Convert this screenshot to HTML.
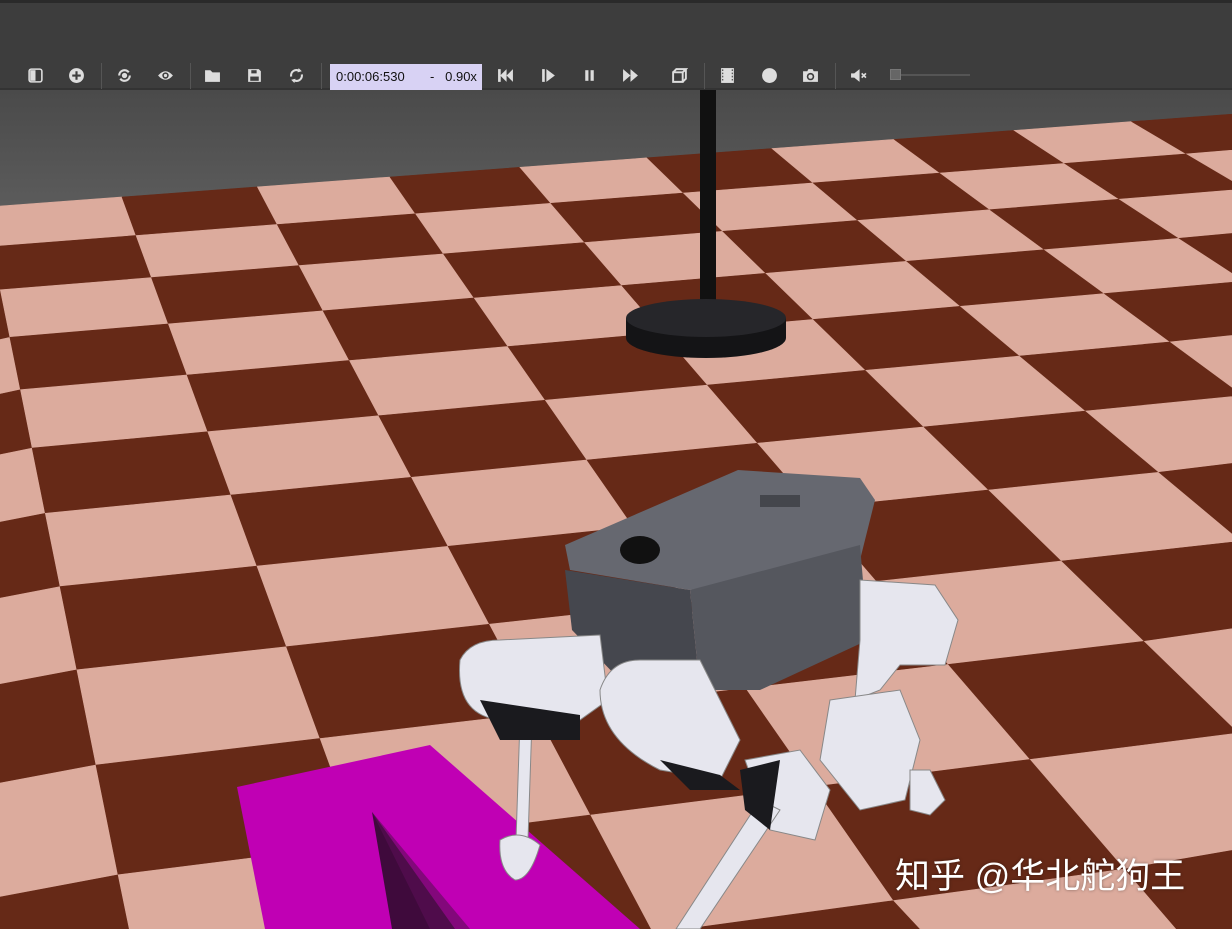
<!DOCTYPE html>
<html><head><meta charset="utf-8"><style>
*{margin:0;padding:0;box-sizing:border-box}
html,body{width:1232px;height:929px;overflow:hidden}
body{background:#555;font-family:"Liberation Sans",sans-serif;position:relative}
#sky{position:absolute;left:0;top:90px;width:1232px;height:200px;background:linear-gradient(#4a4a4a,#5c5c5c 60%,#666)}
#floor{position:absolute;left:0;top:0;display:block}
#tb{position:absolute;left:0;top:0;width:1232px;height:90px;background:#3d3d3d;border-top:3px solid #2a2a2a;border-bottom:2px solid #333}
.ic{position:absolute;top:64px;width:17px;height:17px;fill:#ddd;color:#ddd}
.sep{position:absolute;top:60px;width:1px;height:26px;background:#555}
#time{position:absolute;left:330px;top:61px;width:152px;height:26px;background:#d8d2f4;color:#111;font-size:13px;line-height:26px;padding-left:6px}
#wm{position:absolute;left:895px;top:853px;color:#fff;font-size:35px;line-height:48px;font-family:"Liberation Sans","Noto Sans CJK SC",sans-serif;text-shadow:0 0 3px rgba(0,0,0,.4)}
</style></head><body>
<div id="sky"></div>
<svg id="floor" width="1232" height="929"></svg>
<script>
(function(){
var P=[[122,197],[390,177],[587,460],[231,495]];
var x0=P[0][0],y0=P[0][1],x1=P[1][0],y1=P[1][1],x2=P[2][0],y2=P[2][1],x3=P[3][0],y3=P[3][1];
var dx1=x1-x2,dx2=x3-x2,dy1=y1-y2,dy2=y3-y2,sx=x0-x1+x2-x3,sy=y0-y1+y2-y3;
var den=dx1*dy2-dy1*dx2;
var g=(sx*dy2-sy*dx2)/den,h=(dx1*sy-dy1*sx)/den;
var a=x1-x0+g*x1,b=x3-x0+h*x3,c=x0,d=y1-y0+g*y1,e=y3-y0+h*y3,f=y0;
function m(u,v){var s=u/2,t=v/6;var w=g*s+h*t+1;return [(a*s+b*t+c)/w,(d*s+e*t+f)/w,w];}
var out='';
for(var v=0;v<22;v++)for(var u=-12;u<16;u++){
 var p=[m(u,v),m(u+1,v),m(u+1,v+1),m(u,v+1)];
 if(p[0][2]<=0.05||p[1][2]<=0.05||p[2][2]<=0.05||p[3][2]<=0.05)continue;
 var col=((u+v)%2+2)%2?'#dcab9d':'#662917';
 out+='<polygon points="'+p.map(function(q){return Math.max(-50,Math.min(1300,q[0])).toFixed(1)+','+Math.max(-50,Math.min(1000,q[1])).toFixed(1)}).join(' ')+'" fill="'+col+'" stroke="'+col+'" stroke-width="0.6"/>';
}
document.getElementById('floor').innerHTML=out;
})();
</script>
<svg style="position:absolute;left:0;top:0;display:block" width="1232" height="929">
<rect x="700" y="90" width="16" height="225" fill="#111"/>
<path d="M626 318 L626 338 A80 20 0 0 0 786 338 L786 318 Z" fill="#141416"/>
<ellipse cx="706" cy="318" rx="80" ry="19" fill="#26262a"/>
<polygon points="237,787 430,745 640,929 265,929" fill="#c000b4"/>
<polygon points="372,812 392,929 455,929" fill="#3f0a3c"/>
<polygon points="372,812 430,929 470,929" fill="#5a0d55" opacity=".6"/>
<polygon points="565,545 738,470 860,478 875,500 860,560 690,590 570,570" fill="#666870"/>
<polygon points="565,570 690,590 700,690 620,680 572,630" fill="#45474e"/>
<polygon points="690,590 860,545 868,640 760,690 700,690" fill="#55575e"/>
<ellipse cx="640" cy="550" rx="20" ry="14" fill="#111"/>
<rect x="760" y="495" width="40" height="12" fill="#44464c"/>
<g fill="#e6e6ee" stroke="#888" stroke-width="1">
<path d="M460 660 Q470 640 500 640 L600 635 L608 700 L580 720 L500 720 Q455 715 460 660Z"/>
<path d="M520 720 L532 720 L528 840 L516 840Z"/>
<path d="M500 840 Q520 828 540 845 Q530 880 515 880 Q498 870 500 840Z"/>
<path d="M600 690 Q610 660 640 660 L700 660 L740 740 L720 780 L660 770 Q600 740 600 690Z"/>
<path d="M745 760 L800 750 L830 790 L815 840 L770 830Z"/>
<path d="M760 800 L780 810 L700 929 L676 929Z"/>
<path d="M860 580 L935 585 L958 620 L945 665 L900 665 L880 690 L855 700 L860 640Z"/>
<path d="M830 700 L900 690 L920 740 L905 800 L860 810 L820 760Z"/>
<path d="M910 770 L930 770 L945 800 L930 815 L910 810Z"/>
</g>
<g fill="#1a1a1e">
<path d="M480 700 L580 715 L580 740 L500 740Z"/>
<path d="M660 760 L720 775 L740 790 L690 790Z"/>
<path d="M740 770 L780 760 L770 830 L745 810Z"/>
</g>
</svg>
<div id="tb">
<svg class="ic" style="left:27px" viewBox="0 0 16 16"><rect x="2" y="2" width="12" height="12" rx="2" fill="none" stroke="#ddd" stroke-width="1.5"/><rect x="3" y="3" width="5" height="10" fill="#ddd"/></svg>
<svg class="ic" style="left:68px" viewBox="0 0 16 16"><circle cx="8" cy="8" r="7"/><path d="M8 4v8M4 8h8" stroke="#3d3d3d" stroke-width="2"/></svg>
<div class="sep" style="left:101px"></div>
<svg class="ic" style="left:116px" viewBox="0 0 16 16"><path d="M3 8a5 5 0 0 1 9-3M13 8a5 5 0 0 1-9 3" fill="none" stroke="#ddd" stroke-width="2"/><circle cx="8" cy="8" r="2.5"/></svg>
<svg class="ic" style="left:157px" viewBox="0 0 16 16"><path d="M1 8Q8 0 15 8Q8 16 1 8Z"/><circle cx="8" cy="8" r="3" fill="#3d3d3d"/><circle cx="8" cy="8" r="1.5"/></svg>
<div class="sep" style="left:190px"></div>
<svg class="ic" style="left:204px" viewBox="0 0 16 16"><path d="M1 3h5l2 2h7v9H1Z"/></svg>
<svg class="ic" style="left:246px" viewBox="0 0 16 16"><path d="M2 2h10l2 2v10H2Z"/><rect x="5" y="3" width="5" height="3" fill="#3d3d3d"/><rect x="4" y="9" width="8" height="4" fill="#3d3d3d"/></svg>
<svg class="ic" style="left:288px" viewBox="0 0 16 16"><path d="M3 9a5 5 0 0 1 8-5M13 7a5 5 0 0 1-8 5" fill="none" stroke="#ddd" stroke-width="2"/><path d="M10 1l3 3-4 1zM6 15l-3-3 4-1z"/></svg>
<div class="sep" style="left:321px"></div>
<div id="time">0:00:06:530&nbsp;&nbsp;&nbsp;&nbsp;&nbsp;&nbsp;&nbsp;-&nbsp;&nbsp;&nbsp;0.90x</div>
<svg class="ic" style="left:497px" viewBox="0 0 16 16"><rect x="1" y="2" width="2.5" height="12"/><path d="M9 2v12L3 8ZM15 2v12L9 8Z"/></svg>
<svg class="ic" style="left:540px" viewBox="0 0 16 16"><rect x="2" y="2" width="2.5" height="12"/><path d="M6 2v12l8-6Z"/></svg>
<svg class="ic" style="left:581px" viewBox="0 0 16 16"><rect x="4" y="3" width="3" height="10"/><rect x="9" y="3" width="3" height="10"/></svg>
<svg class="ic" style="left:622px" viewBox="0 0 16 16"><path d="M1 2v12l7-6ZM8 2v12l7-6Z"/></svg>
<svg class="ic" style="left:671px" viewBox="0 0 16 16"><path d="M2 5h9v9H2ZM2 5l3-3h9l-3 3M11 14l3-3V2" fill="none" stroke="#ddd" stroke-width="1.8"/></svg>
<div class="sep" style="left:704px"></div>
<svg class="ic" style="left:719px" viewBox="0 0 16 16"><rect x="2" y="1" width="12" height="14"/><path d="M3 3h1M3 6h1M3 9h1M3 12h1M12 3h1M12 6h1M12 9h1M12 12h1" stroke="#3d3d3d" stroke-width="1.5"/></svg>
<svg class="ic" style="left:761px" viewBox="0 0 16 16"><circle cx="8" cy="8" r="7"/></svg>
<svg class="ic" style="left:802px" viewBox="0 0 16 16"><path d="M1 4h4l1-2h4l1 2h4v10H1Z"/><circle cx="8" cy="9" r="3.5" fill="#3d3d3d"/><circle cx="8" cy="9" r="2"/></svg>
<div class="sep" style="left:835px"></div>
<svg class="ic" style="left:850px" viewBox="0 0 16 16"><path d="M1 6h3l5-4v12l-5-4H1Z"/><path d="M11 6l4 4M15 6l-4 4" stroke="#ddd" stroke-width="1.5"/></svg>
<div style="position:absolute;left:892px;top:71px;width:78px;height:2px;background:#555"></div>
<div style="position:absolute;left:890px;top:66px;width:11px;height:11px;background:#666;border:1px solid #777"></div>
</div>
<div id="wm">知乎 @华北舵狗王</div>
</body></html>
